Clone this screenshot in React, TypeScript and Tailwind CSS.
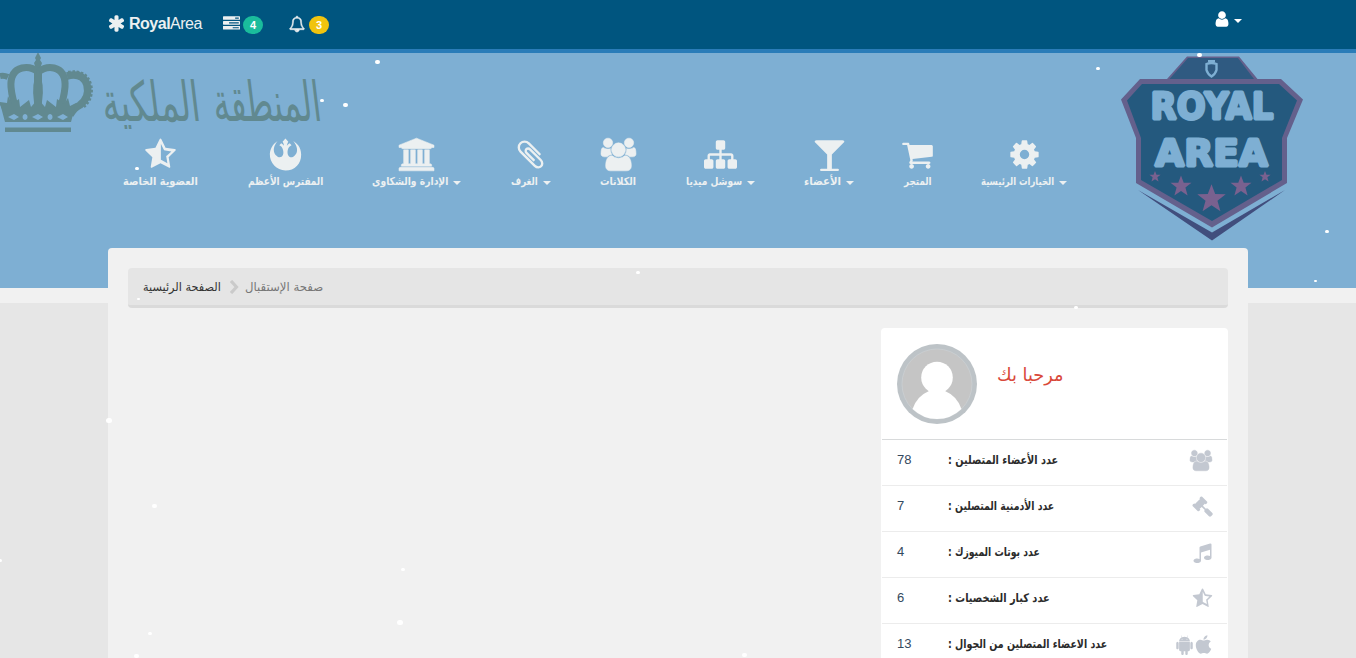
import { useLayoutEffect, useRef } from 'react';
import { FaApple, FaRebel } from 'react-icons/fa';

const paths = {
  users: 'M593 896q-162 5-265 128h-134q-82 0-138-40.5t-56-118.5q0-353 124-353 6 0 43.5 21t97.5 42.5 119 21.5q67 0 133-23-5 37-5 66 0 139 81 256zm1071 637q0 120-73 189.5t-194 69.5h-874q-121 0-194-69.5t-73-189.5q0-53 3.5-103.5t14-109 26.5-108.5 43-97.5 62-81 85.5-53.5 111.5-20q10 0 43 21.5t73 48 107 48 135 21.5 135-21.5 107-48 73-48 43-21.5q61 0 111.5 20t85.5 53.5 62 81 43 97.5 26.5 108.5 14 109 3.5 103.5zm-1024-1277q0 106-75 181t-181 75-181-75-75-181 75-181 181-75 181 75 75 181zm704 384q0 159-112.5 271.5t-271.5 112.5-271.5-112.5-112.5-271.5 112.5-271.5 271.5-112.5 271.5 112.5 112.5 271.5zm576 225q0 78-56 118.5t-138 40.5h-134q-103-123-265-128 81-117 81-256 0-29-5-66 66 23 133 23 59 0 119-21.5t97.5-42.5 43.5-21q124 0 124 353zm-128-609q0 106-75 181t-181 75-181-75-75-181 75-181 181-75 181 75 75 181z',
  star: 'M1250 957l238-225-329-49-66-12-30-60-147-298v866l59 31 294 156-56-328-12-66zm452-262l-363 354 86 500q5 33-6 51.5t-34 18.5q-17 0-40-12l-449-236-449 236q-23 12-40 12-23 0-34-18.5t-6-51.5l86-500-364-354q-32-32-23-59.5t54-34.5l502-73 225-455q20-41 49-41 28 0 49 41l225 455 502 73q45 7 54 34.5t-24 59.5z',
  university: 'M960 0l960 384v128h-128q0 26-20.5 45t-48.5 19h-1526q-28 0-48.5-19t-20.5-45h-128v-128zm-704 640h256v768h128v-768h256v768h128v-768h256v768h128v-768h256v768h59q28 0 48.5 19t20.5 45v64h-1664v-64q0-26 20.5-45t48.5-19h59v-768zm1595 960q28 0 48.5 19t20.5 45v128h-1920v-128q0-26 20.5-45t48.5-19h1782z',
  clip: 'M1596 1385q0 117-79 196t-196 79q-135 0-235-100l-777-776q-113-115-113-271 0-159 110-270t269-111q158 0 273 113l605 606q10 10 10 22 0 16-30.5 46.5t-46.5 30.5q-13 0-23-10l-606-607q-79-77-181-77-106 0-179 75t-73 181q0 105 76 181l776 777q63 63 145 63 64 0 106-42t42-106q0-82-63-145l-581-581q-26-24-60-24-29 0-48 19t-19 48q0 32 25 59l410 410q10 10 10 22 0 16-31 47t-47 31q-12 0-22-10l-410-410q-63-61-63-149 0-82 57-139t139-57q88 0 149 63l581 581q100 98 100 235z',
  sitemap: 'M1792 1248v320q0 40-28 68t-68 28h-320q-40 0-68-28t-28-68v-320q0-40 28-68t68-28h96v-192h-512v192h96q40 0 68 28t28 68v320q0 40-28 68t-68 28h-320q-40 0-68-28t-28-68v-320q0-40 28-68t68-28h96v-192h-512v192h96q40 0 68 28t28 68v320q0 40-28 68t-68 28h-320q-40 0-68-28t-28-68v-320q0-40 28-68t68-28h96v-192q0-52 38-90t90-38h512v-192h-96q-40 0-68-28t-28-68v-320q0-40 28-68t68-28h320q40 0 68 28t28 68v320q0 40-28 68t-68 28h-96v192h512q52 0 90 38t38 90v192h96q40 0 68 28t28 68z',
  glass: 'M1699 186q0 35-43 78l-632 632v768h320q26 0 45 19t19 45-19 45-45 19h-896q-26 0-45-19t-19-45 19-45 45-19h320v-768l-632-632q-43-43-43-78 0-23 18-36.5t38-17.5 43-4h1408q23 0 43 4t38 17.5 18 36.5z',
  cart: 'M704 1536q0 52-38 90t-90 38-90-38-38-90 38-90 90-38 90 38 38 90zm896 0q0 52-38 90t-90 38-90-38-38-90 38-90 90-38 90 38 38 90zm128-1088v512q0 24-16.5 42.5t-40.5 21.5l-1044 122q13 60 13 70 0 16-24 64h920q26 0 45 19t19 45-19 45-45 19h-1024q-26 0-45-19t-19-45q0-11 8-31.5t16-36 21.5-40 15.5-29.5l-177-823h-204q-26 0-45-19t-19-45 19-45 45-19h256q16 0 28.5 6.5t19.5 15.5 13 24.5 8 26 5.5 29.5 4.5 26h1201q26 0 45 19t19 45z',
  cog: 'M1152 896q0-106-75-181t-181-75-181 75-75 181 75 181 181 75 181-75 75-181zm512-109v222q0 12-8 23t-20 13l-185 28q-19 54-39 91 35 50 107 138 10 12 10 25t-9 23q-27 37-99 108t-94 71q-12 0-26-9l-138-108q-44 23-91 38-16 136-29 186-7 28-36 28h-222q-14 0-24.5-8.5t-11.5-21.5l-28-184q-49-16-90-37l-141 107q-10 9-25 9-14 0-25-11-126-114-165-168-7-10-7-23 0-12 8-23 15-21 51-66.5t54-70.5q-27-50-41-99l-183-27q-13-2-21-12.5t-8-23.5v-222q0-12 8-23t19-13l186-28q14-46 39-92-40-57-107-138-10-12-10-24 0-10 9-23 26-36 98.5-107.5t94.5-71.5q13 0 26 10l138 107q44-23 91-38 16-136 29-186 7-28 36-28h222q14 0 24.5 8.5t11.5 21.5l28 184q49 16 90 37l142-107q9-9 24-9 13 0 25 10 129 119 165 170 7 8 7 22 0 12-8 23-15 21-51 66.5t-54 70.5q26 50 41 98l183 28q13 2 21 12.5t8 23.5z',
  gavel: 'M1771 1536q0 53-37 90l-107 108q-39 37-91 37-53 0-90-37l-363-364q-38-36-38-90 0-53 43-96l-256-256-126 126q-14 14-34 14t-34-14q2 2 12.5 12t12.5 13 10 11.5 10 13.5 6 13.5 5.5 16.5 1.5 18q0 38-28 68-3 3-16.5 18t-19 20.5-18.5 16.5-22 15.5-22 9-26 4.5q-40 0-68-28l-408-408q-28-28-28-68 0-13 4.5-26t9-22 15.5-22 16.5-18.5 20.5-19 18-16.5q30-28 68-28 10 0 18 1.5t16.5 5.5 13.5 6 13.5 10 11.5 10 13 12.5 12 12.5q-14-14-14-34t14-34l348-348q14-14 34-14t34 14q-2-2-12.5-12t-12.5-13-10-11.5-10-13.5-6-13.5-5.5-16.5-1.5-18q0-38 28-68 3-3 16.5-18t19-20.5 18.5-16.5 22-15.5 22-9 26-4.5q40 0 68 28l408 408q28 28 28 68 0 13-4.5 26t-9 22-15.5 22-16.5 18.5-20.5 19-18 16.5q-30 28-68 28-10 0-18-1.5t-16.5-5.5-13.5-6-13.5-10-11.5-10-13-12.5-12-12.5q14 14 14 34t-14 34l-126 126 256 256q43-43 96-43 52 0 91 37l363 363q37 39 37 91z',
  music: 'M1664 224v1120q0 50-34 89t-86 60.5-103.5 32-96.5 10.5-96.5-10.5-103.5-32-86-60.5-34-89 34-89 86-60.5 103.5-32 96.5-10.5q105 0 192 39v-537l-768 237v709q0 50-34 89t-86 60.5-103.5 32-96.5 10.5-96.5-10.5-103.5-32-86-60.5-34-89 34-89 86-60.5 103.5-32 96.5-10.5q105 0 192 39v-967q0-31 19-56.5t49-35.5l832-256q12-4 28-4 40 0 68 28t28 68z',
  asterisk: 'M1546 1050q46 26 59.5 77.5t-12.5 97.5l-64 110q-26 46-77.5 59.5t-97.5-12.5l-266-153v307q0 52-38 90t-90 38h-128q-52 0-90-38t-38-90v-307l-266 153q-46 26-97.5 12.5t-77.5-59.5l-64-110q-26-46-12.5-97.5t59.5-77.5l266-154-266-154q-46-26-59.5-77.5t12.5-97.5l64-110q26-46 77.5-59.5t97.5 12.5l266 153v-307q0-52 38-90t90-38h128q52 0 90 38t38 90v307l266-153q46-26 97.5-12.5t77.5 59.5l64 110q26 46 12.5 97.5t-59.5 77.5l-266 154z',
  tasks: 'M1024 1408h640v-128h-640v128zm-384-512h1024v-128h-1024v128zm640-512h384v-128h-384v128zm512 832v256q0 26-19 45t-45 19h-1664q-26 0-45-19t-19-45v-256q0-26 19-45t45-19h1664q26 0 45 19t19 45zm0-512v256q0 26-19 45t-45 19h-1664q-26 0-45-19t-19-45v-256q0-26 19-45t45-19h1664q26 0 45 19t19 45zm0-512v256q0 26-19 45t-45 19h-1664q-26 0-45-19t-19-45v-256q0-26 19-45t45-19h1664q26 0 45 19t19 45z',
  bell: 'M912 1696q0-16-16-16-59 0-101.5-42.5t-42.5-101.5q0-16-16-16t-16 16q0 73 51.5 124.5t124.5 51.5q16 0 16-16zm-666-288h1300q-266-300-266-832 0-51-24-105t-69-103-121.5-80.5-169.5-31.5-169.5 31.5-121.5 80.5-69 103-24 105q0 532-266 832zm1482 0q0 52-38 90t-90 38h-448q0 106-75 181t-181 75-181-75-75-181h-448q-52 0-90-38t-38-90q50-42 91-88t85-119.5 74.5-158.5 50-206 19.5-260q0-152 117-282.5t307-158.5q-8-19-8-39 0-40 28-68t68-28 68 28 28 68q0 20-8 39 190 28 307 158.5t117 282.5q0 139 19.5 260t50 206 74.5 158.5 85 119.5 91 88z',
  user: 'M1536 1399q0 109-62.5 187t-150.5 78h-854q-88 0-150.5-78t-62.5-187q0-85 8.5-160.5t31.5-152 58.5-131 94-89 134.5-34.5q131 128 313 128t313-128q76 0 134.5 34.5t94 89 58.5 131 31.5 152 8.5 160.5zm-256-887q0 159-112.5 271.5t-271.5 112.5-271.5-112.5-112.5-271.5 112.5-271.5 271.5-112.5 271.5 112.5 112.5 271.5z',
  android: 'M685 483q16 0 27.5-11.5t11.5-27.5-11.5-27.5-27.5-11.5-27 11.5-11 27.5 11 27.5 27 11.5zm422 0q16 0 27-11.5t11-27.5-11-27.5-27-11.5-27.5 11.5-11.5 27.5 11.5 27.5 27.5 11.5zm-812 184q42 0 72 30t30 72v430q0 43-29.5 73t-72.5 30-73-30-30-73v-430q0-42 30-72t73-30zm1060 19v666q0 46-32 78t-77 32h-75v227q0 43-30 73t-73 30-73-30-30-73v-227h-138v227q0 43-30 73t-73 30q-42 0-72-30t-30-73l-1-227h-74q-46 0-78-32t-32-78v-666h918zm-232-405q107 55 171 153.5t64 215.5h-925q0-117 64-215.5t172-153.5l-71-131q-7-13 5-20 13-6 20 6l72 132q95-42 201-42t201 42l72-132q7-12 20-6 12 7 5 20zm477 488v430q0 43-30 73t-73 30q-42 0-72-30t-30-73v-430q0-43 30-72.5t72-29.5q43 0 73 29.5t30 72.5z',
};

type IconName = keyof typeof paths;

function Icon({ name, className }: { name: IconName; className: string }) {
  const w = name === 'users' || name === 'university' ? 1920 : 1792;
  return (
    <svg viewBox={`0 0 ${w} 1792`} className={`shrink-0 overflow-visible ${className}`} fill="currentColor">
      <path d={paths[name]} />
    </svg>
  );
}

/* Arabic label squeezed horizontally to a given width. */
function Fit({ text, width, className = '' }: { text: string; width: number; className?: string }) {
  const ref = useRef<HTMLSpanElement>(null);
  useLayoutEffect(() => {
    const el = ref.current;
    if (el) el.style.transform = `scaleX(${width / el.offsetWidth})`;
  }, [width, text]);
  return (
    <span className="inline-flex shrink-0 justify-start" style={{ width }}>
      <span ref={ref} dir="rtl" className={`shrink-0 origin-left whitespace-nowrap font-['DejaVu_Sans',sans-serif] ${className}`}>
        {text}
      </span>
    </span>
  );
}

function Caret({ className = '' }: { className?: string }) {
  return <span className={`h-0 w-0 border-x-4 border-t-4 border-x-transparent border-t-current ${className}`} />;
}

const nav: { icon: IconName | 'rebel'; text: string; w: number; caret?: boolean }[] = [
  { icon: 'star', text: 'العضوية الخاصة', w: 75 },
  { icon: 'rebel', text: 'المفترس الأعظم', w: 75 },
  { icon: 'university', text: 'الإدارة والشكاوى', w: 76, caret: true },
  { icon: 'clip', text: 'الغرف', w: 27, caret: true },
  { icon: 'users', text: 'الكلانات', w: 36 },
  { icon: 'sitemap', text: 'سوشل ميديا', w: 56, caret: true },
  { icon: 'glass', text: 'الأعضاء', w: 37, caret: true },
  { icon: 'cart', text: 'المتجر', w: 28 },
  { icon: 'cog', text: 'الخيارات الرئيسية', w: 73, caret: true },
];

const stats: { n: string; text: string; w: number; icon: IconName; wide?: boolean; apple?: boolean }[] = [
  { n: '78', text: 'عدد الأعضاء المتصلين :', w: 110, icon: 'users', wide: true },
  { n: '7', text: 'عدد الأدمنية المتصلين :', w: 106, icon: 'gavel' },
  { n: '4', text: 'عدد بوتات الميوزك :', w: 92, icon: 'music' },
  { n: '6', text: 'عدد كبار الشخصيات :', w: 102, icon: 'star' },
  { n: '13', text: 'عدد الاعضاء المتصلين من الجوال :', w: 159, icon: 'android', apple: true },
];

const flakes = [
  [377, 62, 5], [322, 101, 4], [345, 105, 5], [1098, 69, 4], [1199.5, 55.5, 5], [1326.5, 232, 4], [1315.5, 281, 3],
  [638, 272.5, 4], [1075.5, 307.5, 4], [137, 168.5, 4], [138.5, 299, 3], [109, 420.5, 6], [154, 506, 5], [402.5, 570, 4],
  [400, 622.5, 6], [149.5, 633.5, 4], [136, 656.5, 5], [744, 655.5, 5], [0, 560.5, 4],
];

const STAR = '0,-10 2.6,-3.2 10,-3 4.2,1.5 6.3,9 0,4.8 -6.3,9 -4.2,1.5 -10,-3 -2.6,-3.2';

function Shield() {
  const stars = [[1155, 176.5, 0.56], [1181, 186, 1.05], [1211.5, 198.5, 1.42], [1241, 186, 1.05], [1265, 176.5, 0.56]];
  return (
    <svg viewBox="1118 53 188 190" className="absolute left-[1118px] top-0 h-[190px] w-[188px]">
      <path d="M1187 56.500H1239L1257.500 79H1281L1303 99.500L1287 138V183L1212 227.500L1136 183V138L1121 99.500L1140 79H1167Z" fill="#64608c" />
      <path d="M1188 58H1238L1254 79H1169.500Z" fill="#2f5a81" />
      <path d="M1142 84H1279L1297 100.500L1282 138V180L1212 221L1141 180V138L1127 100.500Z" fill="#24597e" />
      <path d="M1138 190L1212 232.500L1285 190L1212 240.500Z" fill="#414e7d" />
      <path d="M1206.500 64q5-2 10 0v6q-1 4-5 6.500q-4-2.500-5-6.500z" fill="none" stroke="#7eafd3" strokeWidth="2.400" />
      <path d="M1208 61h7" stroke="#7eafd3" strokeWidth="2" />
      <g fill="#7eafd3" stroke="#7eafd3" strokeWidth="3" strokeLinejoin="bevel" fontFamily="DejaVu Sans" fontWeight="700">
        <text x="1150.500" y="119" fontSize="37" textLength="123" lengthAdjust="spacingAndGlyphs">ROYAL</text>
        <text x="1155" y="166" fontSize="38" textLength="113" lengthAdjust="spacingAndGlyphs">AREA</text>
      </g>
      {stars.map(([x, y, s]) => (
        <polygon key={x} points={STAR} transform={`translate(${x} ${y}) scale(${s})`} fill="#79618f" />
      ))}
    </svg>
  );
}

function Crown() {
  return (
    <svg viewBox="0 53 96 82" className="absolute left-0 top-0 h-[82px] w-24" fill="#618990">
      <path d="M38 52l3 6-1 2 2 3-2 6h-4l-2-6 2-3-1-2z" />
      {/* arches */}
      <g fill="none" stroke="#618990">
        <path d="M38 72Q31 66 22 68Q10 71 11 87Q12 99 17 111" strokeWidth="7" />
        <path d="M38 72Q46 66 54 68Q66 71 65 87Q64 99 59 111" strokeWidth="7" />
        <path d="M38 70V112" strokeWidth="8" />
        <path d="M67 76Q83 72 87 85Q90 97 80 105Q74 108 70 115" strokeWidth="7.500" />
        <path d="M68 72Q87 69 91 85Q94 98 84 107" strokeWidth="2.500" strokeDasharray="2.500 1.800" />
        <path d="M0 76Q4 75 8 77" strokeWidth="6" />
      </g>
      <path d="M38 68q-7 16-4 34h8q3-18-4-34z" />
      <path d="M8 96l4 8 7-5 1 8 9-7 2 7 7-8 7 8 2-7 9 7 1-8 7 5 4-6 2 8 6-3-4 10H4l-4-8v-3l7 1z" />
      <path
        fillRule="evenodd"
        d="M1 107H75L71 122H5ZM14 114l-6 3 6 3 5-3zM25 114a2.500 3 0 1 0 .1 0zM38 114l-6 3 6 3 5-3zM50 114a2.500 3 0 1 0 .1 0zM63 114l-6 3 6 3 5-3z"
      />
      <path d="M5 127.500H71V132H5z" />
    </svg>
  );
}

function Wordmark() {
  return (
    <svg viewBox="96 53 240 84" className="absolute left-24 top-0 h-[84px] w-60" fill="#618990" fontFamily="DejaVu Sans" fontSize="48" direction="rtl">
      <g transform="translate(0 121) scale(1 1.15) skewX(8)">
        <text x="323" y="0" textLength="108" lengthAdjust="spacingAndGlyphs">المنطقة</text>
        <text x="202" y="0" textLength="98" lengthAdjust="spacingAndGlyphs">الملكية</text>
      </g>
    </svg>
  );
}

export default function App() {
  return (
    <div className="relative h-[658px] w-full overflow-hidden bg-[#e6e6e6] font-['Liberation_Sans',Arial,sans-serif]">
      <header className="flex h-[53px] items-start justify-between border-b-4 border-[#2a7cb8] bg-[#00557f] pl-[108px] pr-[114px] text-[#ecf0f1]">
        <div className="flex items-center pt-[13px]">
          <Icon name="asterisk" className="-ml-px mr-[3px] h-[19px] w-[19px]" />
          <span className="flex h-[21px] w-[73px] items-center whitespace-nowrap text-base leading-5 tracking-[-0.5px]">
            <b>Royal</b>Area
          </span>
          <Icon name="tasks" className="ml-[21px] h-[17px] w-[17px]" />
          <span className="ml-[3px] mt-[3px] flex h-[18px] w-5 items-center justify-center rounded-full bg-[#1abc9c] text-[11px] font-bold text-white">4</span>
          <Icon name="bell" className="ml-[26px] h-4 w-4 stroke-current stroke-[60]" />
          <span className="ml-1 mt-[3px] flex h-[18px] w-5 items-center justify-center rounded-full bg-[#f1c40f] text-[11px] font-bold text-white">3</span>
        </div>
        <div className="flex items-center pt-[10px] text-white">
          <Icon name="user" className="h-[18px] w-[18px]" />
          <Caret className="ml-[3px] mt-[3px]" />
        </div>
      </header>

      <section className="relative h-[235px] bg-[#7eafd3]">
        <Crown />
        <Wordmark />
        <Shield />
        <nav className="relative flex gap-[49.5px] pl-[123px] pt-[85px] text-[#ecf0f1]">
          {nav.map((item) => (
            <div key={item.text} className="flex flex-col items-center">
              {item.icon === 'rebel' ? (
                <FaRebel className="h-[33px] w-[33px]" />
              ) : (
                <Icon
                  name={item.icon}
                  className={
                    item.icon === 'users' || item.icon === 'university'
                      ? 'h-[33px] w-[35px] stroke-current stroke-[30]'
                      : 'h-[33px] w-[33px] -mx-1'
                  }
                />
              )}
              <div className="mt-px flex h-5 items-center">
                <Fit text={item.text} width={item.w} className="text-[11px] font-bold leading-5" />
                {item.caret && <Caret className="ml-[5px] mt-px" />}
              </div>
            </div>
          ))}
        </nav>
      </section>
      <div className="h-[15px] bg-[#f1f1f1]" />

      <main className="relative mx-[108px] -mt-[55px] h-[420px] rounded-t bg-[#f1f1f1] px-5 pt-5">
        <div className="flex h-10 items-center rounded border-b-[3px] border-[#dadada] bg-[#e5e5e5] pl-[15px]">
          <Fit text="الصفحة الرئيسية" width={78} className="text-xs leading-5 text-[#333]" />
          <svg viewBox="0 0 10 14" className="ml-2 mr-[6px] h-[14px] w-[10px]" fill="none" stroke="#cacaca" strokeWidth="3.200">
            <path d="M2 1l5.500 6L2 13" />
          </svg>
          <Fit text="صفحة الإستقبال" width={78} className="text-xs leading-5 text-[#777]" />
        </div>

        <aside className="ml-auto mt-5 w-[347px] rounded bg-white">
          <div className="mx-px flex h-[112px] border-b border-[#d8dadb] pl-[15px] pt-4">
            <svg viewBox="0 0 80 80" className="h-20 w-20">
              <circle cx="40" cy="40" r="40" fill="#bdc3c7" />
              <circle cx="40" cy="40" r="35" fill="#c5c5c5" stroke="#cfd3d6" strokeWidth=".6" />
              <circle cx="40" cy="33.500" r="15.800" fill="#fff" />
              <path d="M15.500 65Q20 52 32 47H48Q60 52 64.500 65Q54 75 40 75T15.500 65Z" fill="#fff" />
            </svg>
            <div className="ml-5 pt-[17px]">
              <Fit text="مرحبا بك" width={67} className="text-lg leading-7 text-[#d9493a]" />
            </div>
          </div>
          {stats.map((s) => (
            <div key={s.n} className="mx-px flex h-[46px] items-start border-b border-[#ececec] pl-[15px] pr-[14px] pt-[10px]">
              <span className="w-[51px] text-[13px] leading-5 text-[#34495e]">{s.n}</span>
              <Fit text={s.text} width={s.w} className="text-[12px] font-bold leading-5 text-[#2b2b2b]" />
              <span className="ml-auto flex items-center text-[#c3c8d1]">
                <Icon name={s.icon} className={s.wide ? 'mr-px h-[21px] w-[22px] stroke-current stroke-[40]' : 'h-[21px] w-[21px]'} />
                {s.apple && <FaApple className="-ml-px h-[21px] w-[19px]" />}
              </span>
            </div>
          ))}
        </aside>
      </main>

      {flakes.map(([x, y, d]) => (
        <span key={`${x}-${y}`} className="absolute rounded-full bg-white" style={{ left: x - d / 2, top: y - d / 2, width: d, height: d - 1 }} />
      ))}
    </div>
  );
}
